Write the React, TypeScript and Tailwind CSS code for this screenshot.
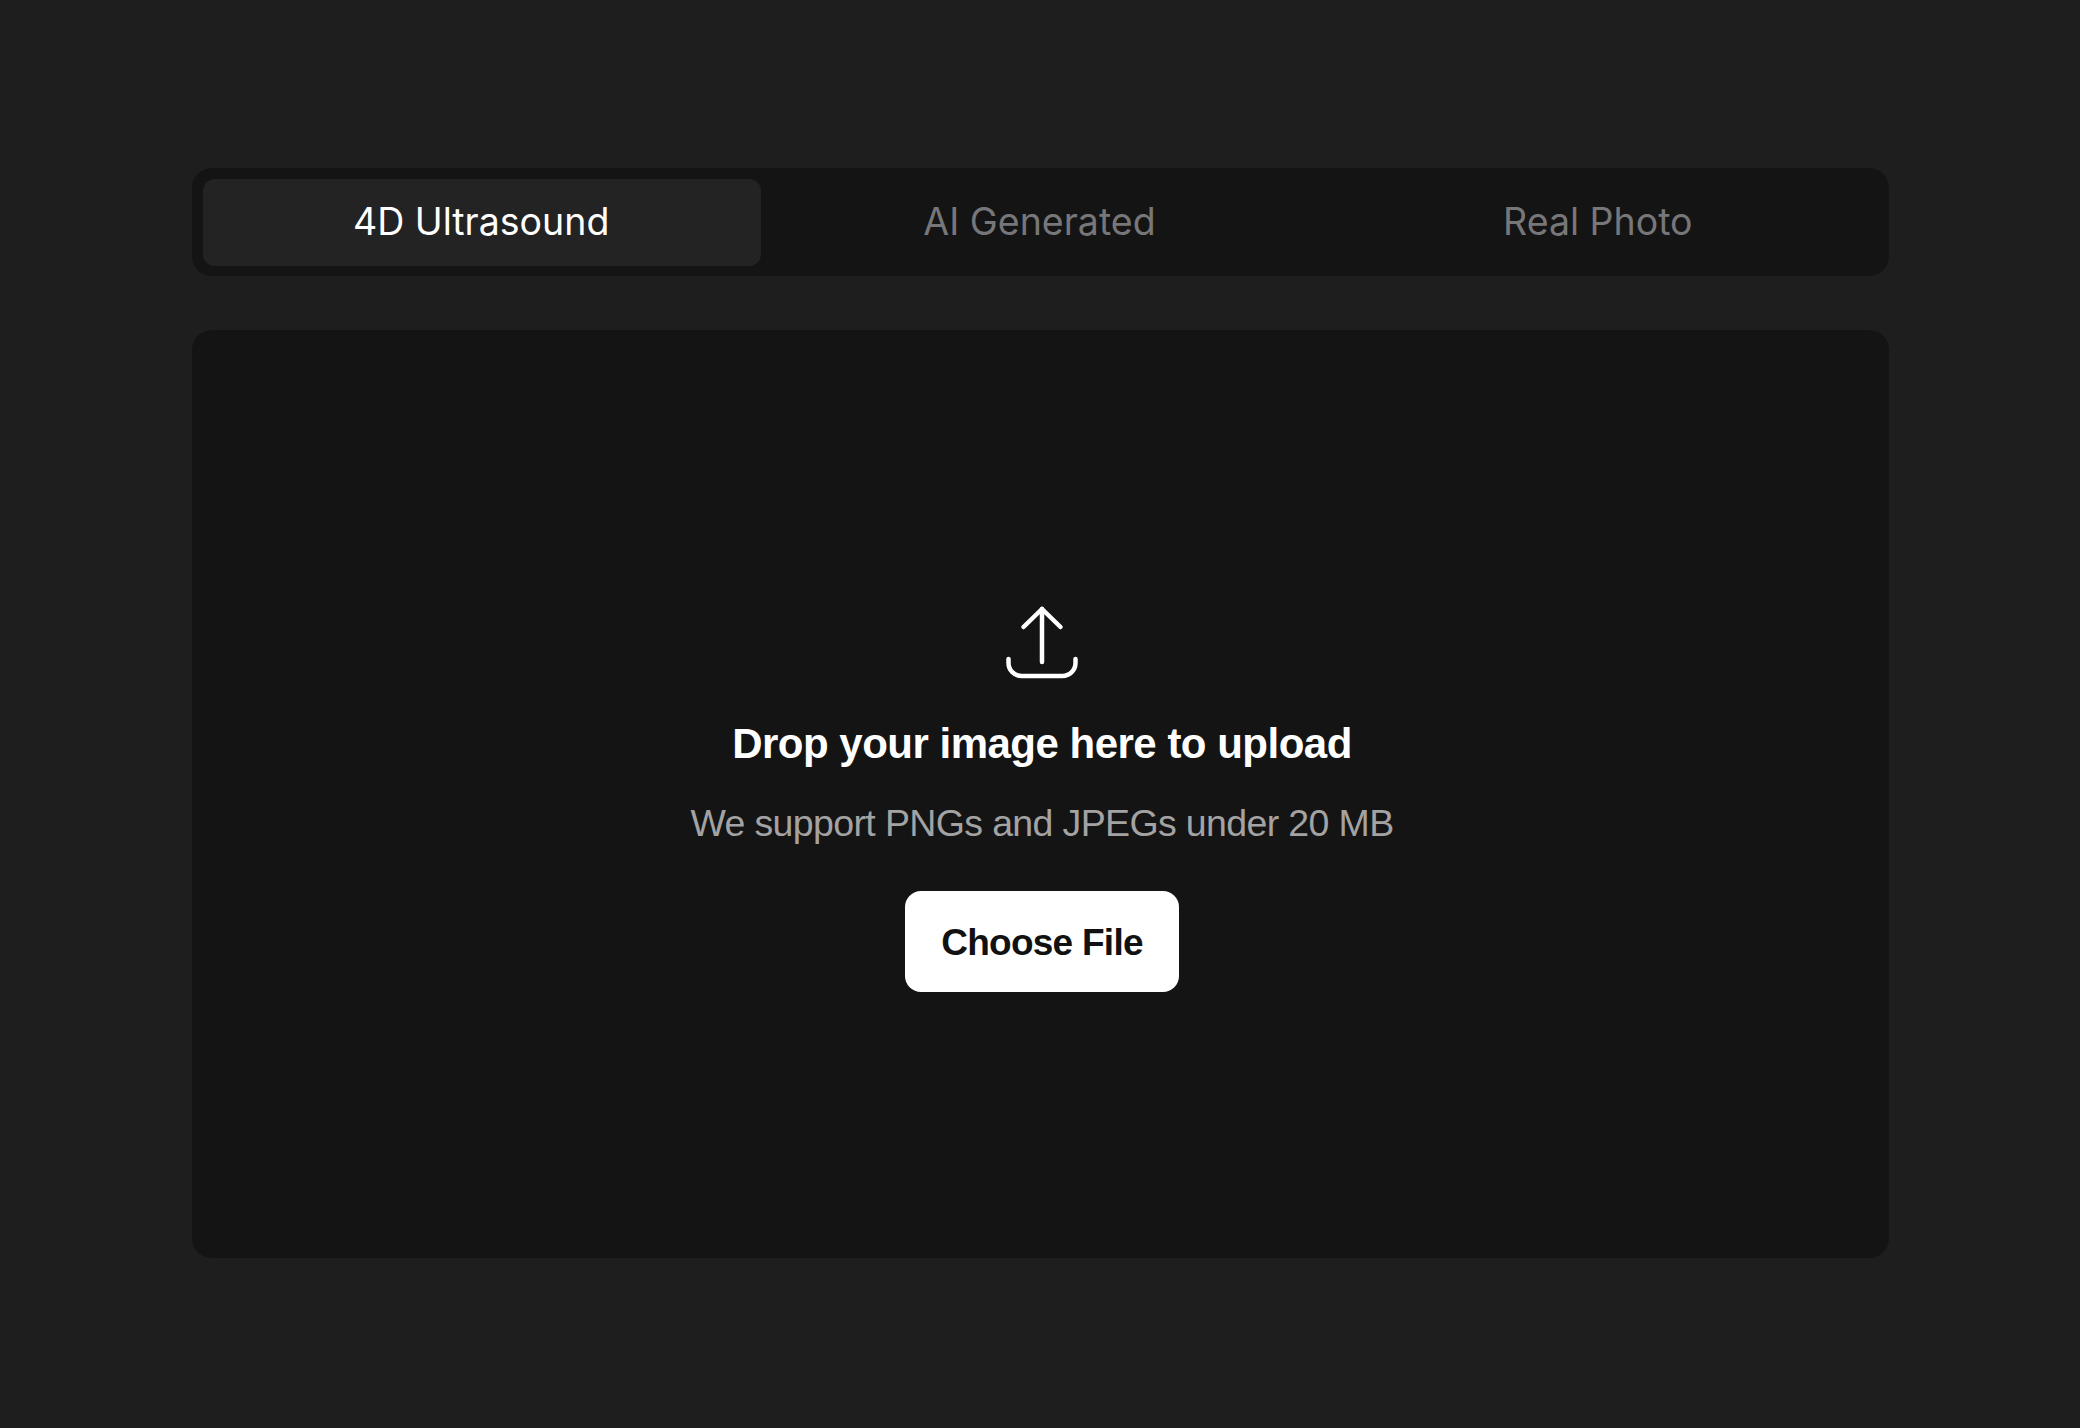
export default function App() {
  const inter = "font-['Inter',sans-serif]";
  const grotesk = "font-['Liberation_Sans',sans-serif]";
  return (
    <div className={`min-h-[1428px] w-full bg-[#1e1e1e] px-[192px] pt-[168px] ${inter}`}>
      <div className="flex h-[108px] w-[1697px] rounded-[20px] bg-[#141414] pb-[10px] pl-[11px] pr-[11px] pt-[11px]">
        <div className="flex flex-1 items-center justify-center rounded-[12px] bg-[#232323] pr-[2px] text-[37.5px] text-white">4D Ultrasound</div>
        <div className="flex flex-1 items-center justify-center pr-[2px] text-[37.5px] text-[#77777a]">AI Generated</div>
        <div className="flex flex-1 items-center justify-center pr-[2px] text-[37.5px] text-[#77777a]">Real Photo</div>
      </div>
      <div className="mt-[54px] flex h-[928px] w-[1697px] flex-col items-center justify-center rounded-[20px] bg-[#141414] pl-[3px] pt-[7px]">
        <svg width="80" height="80" viewBox="0 0 80 80" fill="none" stroke="white" strokeWidth="4.5" strokeLinecap="round" strokeLinejoin="round">
          <path d="M21.5 23 L40 5 L58.5 23" />
          <path d="M40 5 V58" />
          <path d="M6.5 55 V59 a13 13 0 0 0 13 13 H60.5 a13 13 0 0 0 13 -13 V55" />
        </svg>
        <div className={`mt-[36px] text-[42px] font-bold leading-[48px] tracking-[-0.012em] text-white ${grotesk}`}>Drop your image here to upload</div>
        <div className={`mt-[33px] text-[37.5px] leading-[44px] tracking-[-0.017em] text-[#a3a3a3] ${grotesk}`}>We support PNGs and JPEGs under 20 MB</div>
        <button className={`mt-[46px] flex h-[101px] w-[274px] items-center justify-center rounded-[16px] bg-white pt-[3px] text-[37px] font-bold tracking-[-0.02em] text-[#111] ${grotesk}`}>Choose File</button>
      </div>
    </div>
  );
}
